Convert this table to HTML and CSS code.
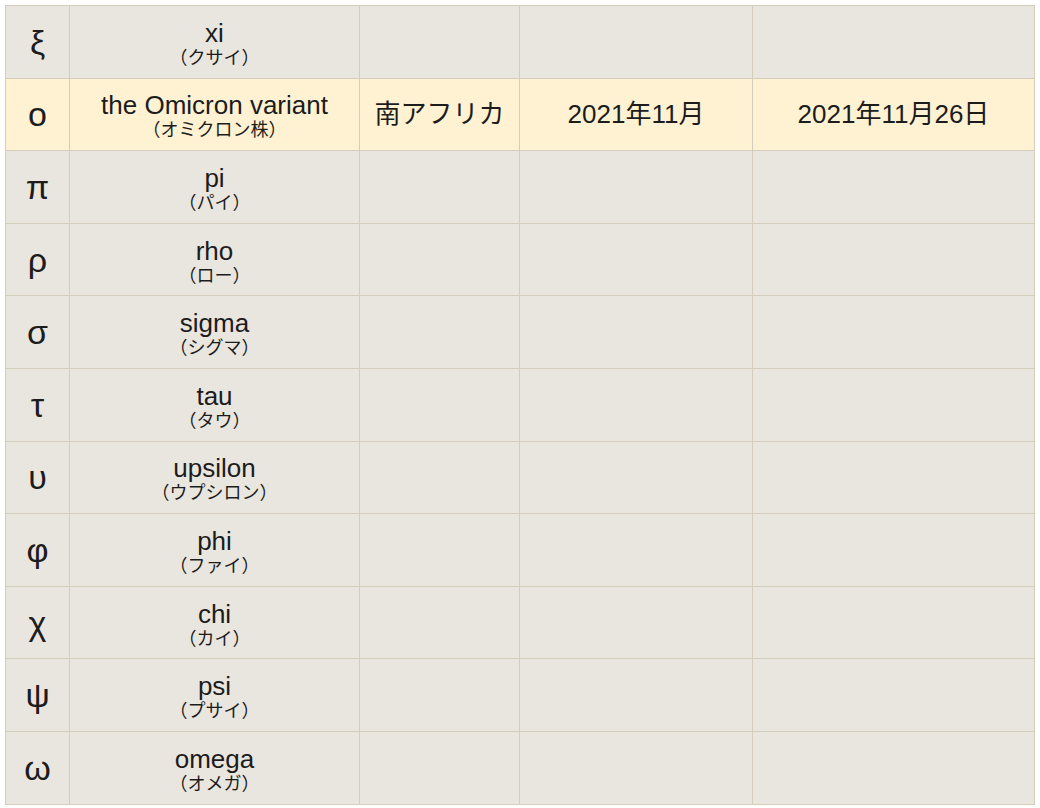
FILE: index.html
```html
<!DOCTYPE html>
<html lang="ja">
<head>
<meta charset="utf-8">
<title>Greek letters</title>
<link rel="stylesheet" href="styles.css">
</head>
<body>
<table class="grid">
  <colgroup>
    <col class="c-letter"><col class="c-name"><col class="c-place"><col class="c-month"><col class="c-date">
  </colgroup>
  <tbody>
    <tr><td class="letter">ξ</td><td class="name"><div class="en">xi</div><div class="ja">（クサイ）</div></td><td></td><td></td><td></td></tr>
    <tr class="hl"><td class="letter">ο</td><td class="name"><div class="en">the Omicron variant</div><div class="ja">（オミクロン株）</div></td><td class="val">南アフリカ</td><td class="val">2021年11月</td><td class="val">2021年11月26日</td></tr>
    <tr><td class="letter">π</td><td class="name"><div class="en">pi</div><div class="ja">（パイ）</div></td><td></td><td></td><td></td></tr>
    <tr><td class="letter">ρ</td><td class="name"><div class="en">rho</div><div class="ja">（ロー）</div></td><td></td><td></td><td></td></tr>
    <tr><td class="letter">σ</td><td class="name"><div class="en">sigma</div><div class="ja">（シグマ）</div></td><td></td><td></td><td></td></tr>
    <tr><td class="letter">τ</td><td class="name"><div class="en">tau</div><div class="ja">（タウ）</div></td><td></td><td></td><td></td></tr>
    <tr><td class="letter">υ</td><td class="name"><div class="en">upsilon</div><div class="ja">（ウプシロン）</div></td><td></td><td></td><td></td></tr>
    <tr><td class="letter">φ</td><td class="name"><div class="en">phi</div><div class="ja">（ファイ）</div></td><td></td><td></td><td></td></tr>
    <tr><td class="letter">χ</td><td class="name"><div class="en">chi</div><div class="ja">（カイ）</div></td><td></td><td></td><td></td></tr>
    <tr><td class="letter">ψ</td><td class="name"><div class="en">psi</div><div class="ja">（プサイ）</div></td><td></td><td></td><td></td></tr>
    <tr><td class="letter">ω</td><td class="name"><div class="en">omega</div><div class="ja">（オメガ）</div></td><td></td><td></td><td></td></tr>
  </tbody>
</table>
</body>
</html>
```

FILE: styles.css
```css
html, body {
  margin: 0;
  padding: 0;
  background: #ffffff;
}

body {
  padding: 5px 0 0 5px;
  font-family: "Liberation Sans", Arial, "Noto Sans CJK JP", sans-serif;
  color: #1c1c1c;
}

.grid {
  border-collapse: collapse;
  table-layout: fixed;
  width: 1029px;
}

.c-letter { width: 64px; }
.c-name { width: 290px; }
.c-place { width: 160px; }
.c-month { width: 233px; }
.c-date { width: 282px; }

.grid tr {
  height: 72.6px;
}

.grid td {
  background: #e9e6df;
  border: 1px solid #d5cdbb;
  padding: 0;
  text-align: center;
  vertical-align: middle;
}

.grid tr.hl td {
  background: #fff2d3;
}

.letter {
  font-size: 34px;
  line-height: 1;
}

.en {
  font-size: 26px;
  line-height: 28px;
}

.ja {
  font-family: "Noto Sans CJK JP", sans-serif;
  font-size: 18px;
  line-height: 18px;
  font-weight: 400;
}

.val {
  font-size: 26px;
  line-height: 1;
}
```
